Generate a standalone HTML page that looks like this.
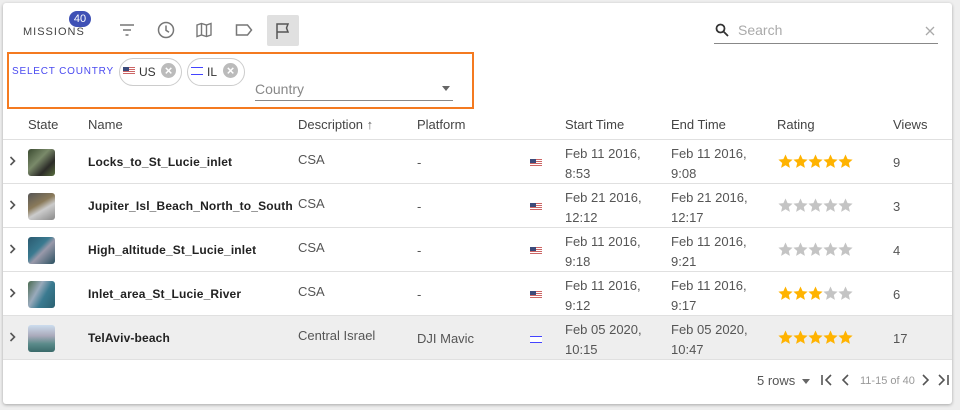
<!DOCTYPE html>
<html><head><style>
*{box-sizing:border-box;margin:0;padding:0}
body{width:960px;height:410px;background:#eeeeee;font-family:"Liberation Sans",sans-serif;color:#333;position:relative;overflow:hidden}
.card{position:absolute;left:3px;top:3px;width:949px;height:401px;background:#fff;box-shadow:0 1px 3px rgba(0,0,0,.3);border-radius:3px}
.a{position:absolute}
.hdr{font-size:13px;color:#444}
.row{position:absolute;left:0;width:949px;height:44px;border-top:1px solid #e0e0e0}
.name{font-weight:bold;font-size:12px;letter-spacing:.15px;color:#222}
.t{font-size:13px;color:#555;line-height:20px}
.th{width:27px;height:27px;border-radius:3px}
.flagus{width:12px;height:8px;background:repeating-linear-gradient(#c66 0 1px,#fff 1px 2px);position:absolute}
.flagus:before{content:"";position:absolute;left:0;top:0;width:6px;height:4px;background:#3b4a7a}
.chev{position:absolute;left:6px;top:16px}
</style></head><body>
<svg width="0" height="0" style="position:absolute"><defs>
<path id="st" d="M7.5 0.5l2.1 4.6 5 .5-3.8 3.4 1.1 4.9-4.4-2.6-4.4 2.6 1.1-4.9L.4 5.6l5-.5z"/>
<path id="cv" d="M1.5 1l4 4-4 4" fill="none" stroke="#555" stroke-width="1.6"/>
</defs></svg>
<div class="card">
 <div class="a" style="left:20px;top:23px;font-size:11px;letter-spacing:1px;color:#444">MISSIONS</div>
 <div class="a" style="left:66px;top:8px;width:22px;height:16px;border-radius:8px;background:#3f51b5;color:#fff;font-size:11px;text-align:center;line-height:16px">40</div>
 <svg class="a" style="left:115px;top:20px" width="18" height="14" viewBox="0 0 18 14" fill="none" stroke="#777" stroke-width="1.5"><path d="M2 2h14M5 7h8M7.5 12h3"/></svg>
 <svg class="a" style="left:154px;top:18px" width="18" height="18" viewBox="0 0 18 18" fill="none" stroke="#777" stroke-width="1.5"><circle cx="9" cy="9" r="7.5"/><path d="M9 4.5v4.8l3 2"/></svg>
 <svg class="a" style="left:193px;top:19px" width="16" height="16" viewBox="0 0 16 16" fill="none" stroke="#777" stroke-width="1.4"><path d="M1 3l4.5-1.5 5 1.5 4.5-1.5v11.5l-4.5 1.5-5-1.5-4.5 1.5zM5.5 1.5v11.5M10.5 3v11.5"/></svg>
 <svg class="a" style="left:232px;top:20px" width="18" height="14" viewBox="0 0 18 14" fill="none" stroke="#777" stroke-width="1.5"><path d="M1.5 2h11l4 5-4 5h-11z"/></svg>
 <div class="a" style="left:264px;top:12px;width:32px;height:31px;background:#e0e0e0;border-radius:2px"></div>
 <svg class="a" style="left:272px;top:19px" width="16" height="18" viewBox="0 0 16 18" fill="none" stroke="#555" stroke-width="1.5"><path d="M2 17V2h11l-1.5 4 1.5 4H2"/></svg>
 <svg class="a" style="left:712px;top:20px" width="14" height="14" viewBox="0 0 14 14" fill="none" stroke="#333" stroke-width="1.8"><circle cx="5.5" cy="5.5" r="4"/><path d="M8.5 8.5l4.5 4.5"/></svg>
 <div class="a" style="left:735px;top:19px;font-size:14px;color:#aaa">Search</div>
 <svg class="a" style="left:922px;top:23px" width="10" height="10" viewBox="0 0 10 10" stroke="#aaa" stroke-width="1.3"><path d="M1 1l8 8M9 1L1 9"/></svg>
 <div class="a" style="left:711px;top:40px;width:224px;height:1px;background:#888"></div>

 <div class="a" style="left:4px;top:49px;width:467px;height:57px;border:2px solid #f47a20"></div>
 <div class="a" style="left:9px;top:63px;font-size:10px;letter-spacing:.8px;color:#4a4af0">SELECT COUNTRY</div>
 <div class="a" style="left:116px;top:55px;width:63px;height:28px;border:1px solid #ccc;border-radius:14px"></div>
 <div class="flagus" style="left:120px;top:64px"></div>
 <div class="a" style="left:136px;top:62px;font-size:12px;color:#333">US</div>
 <div class="a" style="left:158px;top:60px;width:15px;height:15px;border-radius:50%;background:#bbb;color:#fff;font-size:13px;line-height:15px;text-align:center;font-weight:bold">×</div>
 <div class="a" style="left:184px;top:55px;width:58px;height:28px;border:1px solid #ccc;border-radius:14px"></div>
 <div class="a" style="left:188px;top:64px;width:12px;height:8px;border-top:1px solid #44f;border-bottom:1px solid #44f"></div>
 <div class="a" style="left:204px;top:62px;font-size:12px;color:#333">IL</div>
 <div class="a" style="left:220px;top:60px;width:15px;height:15px;border-radius:50%;background:#bbb;color:#fff;font-size:13px;line-height:15px;text-align:center;font-weight:bold">×</div>
 <div class="a" style="left:252px;top:78px;font-size:14px;color:#888">Country</div>
 <div class="a" style="left:439px;top:83px;border-left:4px solid transparent;border-right:4px solid transparent;border-top:5px solid #666"></div>
 <div class="a" style="left:252px;top:97px;width:198px;height:1px;background:#888"></div>

 <div class="a hdr" style="left:25px;top:114px">State</div>
 <div class="a hdr" style="left:85px;top:114px">Name</div>
 <div class="a hdr" style="left:295px;top:114px">Description <span style="color:#666">↑</span></div>
 <div class="a hdr" style="left:414px;top:114px">Platform</div>
 <div class="a hdr" style="left:562px;top:114px">Start Time</div>
 <div class="a hdr" style="left:668px;top:114px">End Time</div>
 <div class="a hdr" style="left:774px;top:114px">Rating</div>
 <div class="a hdr" style="left:890px;top:114px">Views</div>

 <div class="row" style="top:136px">
  <svg class="chev" width="8" height="10"><use href="#cv"/></svg>
  <div class="a th" style="left:25px;top:9px;background:linear-gradient(135deg,#3a4a30,#7a8a6a 40%,#2c2c28 70%,#5a7040)"></div>
  <div class="a name" style="left:85px;top:15px">Locks_to_St_Lucie_inlet</div>
  <div class="a t" style="left:295px;top:10px">CSA</div>
  <div class="a t" style="left:414px;top:13px">-</div>
  <div class="flagus" style="left:527px;top:19px"></div>
  <div class="a t" style="left:562px;top:4px">Feb 11 2016,<br>8:53</div>
  <div class="a t" style="left:668px;top:4px">Feb 11 2016,<br>9:08</div>
  <svg class="a" style="left:775px;top:14px" width="76" height="14" fill="#ffb300"><use href="#st"/><use href="#st" x="15"/><use href="#st" x="30"/><use href="#st" x="45"/><use href="#st" x="60"/></svg>
  <div class="a t" style="left:890px;top:13px">9</div>
 </div>
 <div class="row" style="top:180px">
  <svg class="chev" width="8" height="10"><use href="#cv"/></svg>
  <div class="a th" style="left:25px;top:9px;background:linear-gradient(150deg,#555 ,#8a7a5a 40%,#ccc 60%,#888)"></div>
  <div class="a name" style="left:85px;top:15px">Jupiter_Isl_Beach_North_to_South</div>
  <div class="a t" style="left:295px;top:10px">CSA</div>
  <div class="a t" style="left:414px;top:13px">-</div>
  <div class="flagus" style="left:527px;top:19px"></div>
  <div class="a t" style="left:562px;top:4px">Feb 21 2016,<br>12:12</div>
  <div class="a t" style="left:668px;top:4px">Feb 21 2016,<br>12:17</div>
  <svg class="a" style="left:775px;top:14px" width="76" height="14" fill="#c4c4c4"><use href="#st"/><use href="#st" x="15"/><use href="#st" x="30"/><use href="#st" x="45"/><use href="#st" x="60"/></svg>
  <div class="a t" style="left:890px;top:13px">3</div>
 </div>
 <div class="row" style="top:224px">
  <svg class="chev" width="8" height="10"><use href="#cv"/></svg>
  <div class="a th" style="left:25px;top:9px;background:linear-gradient(135deg,#2a5a70,#3a7a90 40%,#99a 55%,#2a5060)"></div>
  <div class="a name" style="left:85px;top:15px">High_altitude_St_Lucie_inlet</div>
  <div class="a t" style="left:295px;top:10px">CSA</div>
  <div class="a t" style="left:414px;top:13px">-</div>
  <div class="flagus" style="left:527px;top:19px"></div>
  <div class="a t" style="left:562px;top:4px">Feb 11 2016,<br>9:18</div>
  <div class="a t" style="left:668px;top:4px">Feb 11 2016,<br>9:21</div>
  <svg class="a" style="left:775px;top:14px" width="76" height="14" fill="#c4c4c4"><use href="#st"/><use href="#st" x="15"/><use href="#st" x="30"/><use href="#st" x="45"/><use href="#st" x="60"/></svg>
  <div class="a t" style="left:890px;top:13px">4</div>
 </div>
 <div class="row" style="top:268px">
  <svg class="chev" width="8" height="10"><use href="#cv"/></svg>
  <div class="a th" style="left:25px;top:9px;background:linear-gradient(120deg,#4a6a50,#9ab 35%,#3a7a90 60%,#2a6070)"></div>
  <div class="a name" style="left:85px;top:15px">Inlet_area_St_Lucie_River</div>
  <div class="a t" style="left:295px;top:10px">CSA</div>
  <div class="a t" style="left:414px;top:13px">-</div>
  <div class="flagus" style="left:527px;top:19px"></div>
  <div class="a t" style="left:562px;top:4px">Feb 11 2016,<br>9:12</div>
  <div class="a t" style="left:668px;top:4px">Feb 11 2016,<br>9:17</div>
  <svg class="a" style="left:775px;top:14px" width="76" height="14" fill="#ffb300"><use href="#st"/><use href="#st" x="15"/><use href="#st" x="30"/><use href="#st" x="45" fill="#c4c4c4"/><use href="#st" x="60" fill="#c4c4c4"/></svg>
  <div class="a t" style="left:890px;top:13px">6</div>
 </div>
 <div class="row" style="top:312px;background:#eeeeee">
  <svg class="chev" width="8" height="10"><use href="#cv"/></svg>
  <div class="a th" style="left:25px;top:9px;background:linear-gradient(180deg,#cde 0,#aab 40%,#5a8a8a 70%,#3a6a6a)"></div>
  <div class="a name" style="left:85px;top:15px">TelAviv-beach</div>
  <div class="a t" style="left:295px;top:10px">Central Israel</div>
  <div class="a t" style="left:414px;top:13px">DJI Mavic</div>
  <div class="a" style="left:527px;top:20px;width:12px;height:7px;background:#fff;border-top:1px solid #44f;border-bottom:1px solid #44f"></div>
  <div class="a t" style="left:562px;top:4px">Feb 05 2020,<br>10:15</div>
  <div class="a t" style="left:668px;top:4px">Feb 05 2020,<br>10:47</div>
  <svg class="a" style="left:775px;top:14px" width="76" height="14" fill="#ffb300"><use href="#st"/><use href="#st" x="15"/><use href="#st" x="30"/><use href="#st" x="45"/><use href="#st" x="60"/></svg>
  <div class="a t" style="left:890px;top:13px">17</div>
 </div>
 <div class="a" style="left:0;top:356px;width:949px;height:1px;background:#e0e0e0"></div>

 <div class="a" style="left:754px;top:370px;font-size:13px;color:#555">5 rows</div>
 <div class="a" style="left:799px;top:376px;border-left:4px solid transparent;border-right:4px solid transparent;border-top:5px solid #666"></div>
 <svg class="a" style="left:817px;top:371px" width="14" height="12" viewBox="0 0 14 12" fill="none" stroke="#555" stroke-width="1.6"><path d="M2 1v10M11 1L6 6l5 5"/></svg>
 <svg class="a" style="left:838px;top:371px" width="10" height="12" viewBox="0 0 10 12" fill="none" stroke="#555" stroke-width="1.6"><path d="M7 1L2 6l5 5"/></svg>
 <div class="a" style="left:857px;top:372px;font-size:11px;color:#999">11-15 of 40</div>
 <svg class="a" style="left:917px;top:371px" width="10" height="12" viewBox="0 0 10 12" fill="none" stroke="#555" stroke-width="1.6"><path d="M3 1l5 5-5 5"/></svg>
 <svg class="a" style="left:933px;top:371px" width="14" height="12" viewBox="0 0 14 12" fill="none" stroke="#555" stroke-width="1.6"><path d="M12 1v10M3 1l5 5-5 5"/></svg>
</div>
</body></html>
